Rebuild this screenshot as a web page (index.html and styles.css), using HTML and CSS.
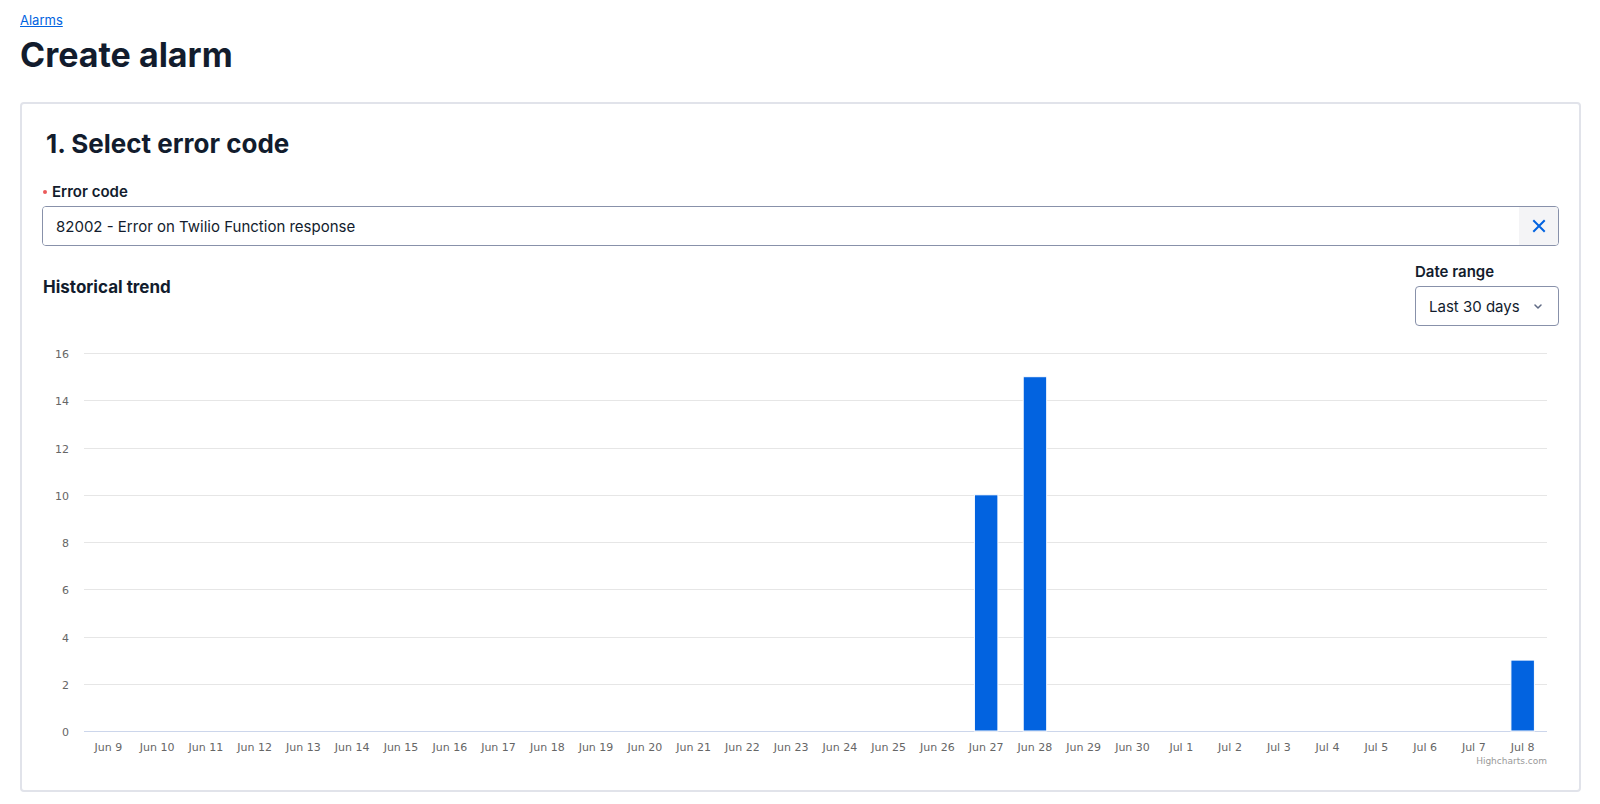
FILE: index.html
```html
<!DOCTYPE html>
<html lang="en">
<head>
  <meta charset="UTF-8">
  <title>Create alarm</title>
  <link rel="stylesheet" href="styles.css">
</head>
<body>
  <div class="page">
    <a class="crumb" href="#">Alarms</a>
    <h1>Create alarm</h1>

    <section class="card">
      <h2>1. Select error code</h2>

      <label class="field-label" for="errorCode"><span class="required"></span>Error code</label>
      <div class="combobox">
        <input id="errorCode" type="text" value="82002 - Error on Twilio Function response">
        <button class="clear" type="button" aria-label="Clear">
          <svg width="14" height="14" viewBox="0 0 14 14"><path d="M2 2 L12 12 M12 2 L2 12" stroke="#0263e0" stroke-width="2" fill="none" stroke-linecap="square"/></svg>
        </button>
      </div>

      <div class="trend-head">
        <h3>Historical trend</h3>
        <div class="range">
          <label class="field-label" for="dateRange">Date range</label>
          <div class="select" id="dateRange">
            <span>Last 30 days</span>
            <svg width="8" height="5" viewBox="0 0 8 5"><path d="M1 1 L4 4 L7 1" stroke="#606b85" stroke-width="1.5" fill="none" stroke-linecap="round" stroke-linejoin="round"/></svg>
          </div>
        </div>
      </div>

      <svg id="trendChart" class="chart" viewBox="0 0 1517 435" width="100%" height="435"></svg>
    </section>
  </div>

  <script>
    const days = [];
    for (let d = 9; d <= 30; d++) days.push('Jun ' + d);
    for (let d = 1; d <= 8; d++) days.push('Jul ' + d);
    const counts = { 'Jun 27': 10, 'Jun 28': 15, 'Jul 8': 3 };

    const chart = document.getElementById('trendChart');
    const left = 42, right = 1505, bottom = 395, unit = 23.62;
    const step = (right - left) / days.length;
    let out = '';

    // grid lines and y axis labels
    for (let v = 0; v <= 16; v += 2) {
      const y = Math.round(bottom - v * unit) + 0.5;
      if (v > 0) out += `<line x1="${left}" x2="${right}" y1="${y}" y2="${y}" class="grid"/>`;
      out += `<text x="27" y="${y + 4}" text-anchor="end" class="tick">${v}</text>`;
    }
    out += `<line x1="${left}" x2="${right}" y1="${bottom + 0.5}" y2="${bottom + 0.5}" class="axis"/>`;

    // bars and x axis labels
    days.forEach((day, i) => {
      const cx = left + (i + 0.5) * step;
      const v = counts[day] || 0;
      if (v) {
        const h = v * unit;
        out += `<rect x="${(cx - 11.75).toFixed(1)}" y="${(bottom - h).toFixed(1)}" width="23.5" height="${h.toFixed(1)}" class="bar"/>`;
      }
      out += `<text x="${cx.toFixed(1)}" y="415" text-anchor="middle" class="tick">${day}</text>`;
    });

    out += `<text x="${right}" y="428" text-anchor="end" class="credits">Highcharts.com</text>`;
    chart.innerHTML = out;
  </script>
</body>
</html>
```

FILE: styles.css
```css
body {
  margin: 0;
  background-color: #ffffff;
  color: #121c2d;
  font-family: Inter, 'Noto Sans', sans-serif;
}
.page {
  padding: 9px 19px 0 20px;
}
.crumb {
  display: inline-block;
  font-size: 13px;
  line-height: 16px;
  color: #0263e0;
  text-decoration: underline;
}
h1 {
  margin: 6px 0 27px;
  font-size: 34px;
  line-height: 40px;
  font-weight: 700;
}
.card {
  border: 2px solid #e1e3ea;
  border-radius: 4px;
  padding: 24px 20px 19px;
}
h2 {
  margin: 0 0 22px;
  padding-left: 4px;
  font-size: 26px;
  line-height: 32px;
  font-weight: 700;
}
.field-label {
  display: flex;
  align-items: center;
  margin-bottom: 4px;
  font-size: 15px;
  line-height: 20px;
  font-weight: 600;
}
.required {
  width: 4px;
  height: 4px;
  border-radius: 50%;
  background-color: #eb5a5a;
  margin: 0 5px 0 1px;
}
.combobox {
  display: flex;
  height: 40px;
  box-sizing: border-box;
  border: 1px solid #8891aa;
  border-radius: 4px;
  overflow: hidden;
}
.combobox input {
  flex: 1;
  border: none;
  outline: none;
  padding: 0 13px;
  font-family: inherit;
  font-size: 15px;
  color: #121c2d;
}
.clear {
  width: 39px;
  border: none;
  background-color: #f4f4f6;
  display: flex;
  align-items: center;
  justify-content: center;
  padding: 0;
}
.trend-head {
  display: flex;
  justify-content: space-between;
  align-items: flex-start;
  margin-top: 16px;
}
h3 {
  margin: 13px 0 0 1px;
  font-size: 17px;
  line-height: 24px;
  font-weight: 700;
}
.select {
  width: 144px;
  height: 40px;
  box-sizing: border-box;
  border: 1px solid #8891aa;
  border-radius: 4px;
  display: flex;
  align-items: center;
  justify-content: space-between;
  padding: 0 16px 0 13px;
  font-size: 15px;
}
.chart {
  display: block;
  margin-top: 10px;
}
.chart .grid {
  stroke: #e6e6e6;
  stroke-width: 1;
}
.chart .axis {
  stroke: #ccd6eb;
  stroke-width: 1;
}
.chart .bar {
  fill: #0263e0;
  stroke: #ffffff;
  stroke-width: 1;
}
.chart .tick {
  font-family: 'DejaVu Sans', sans-serif;
  font-size: 11px;
  fill: #666666;
}
.chart .credits {
  font-family: 'DejaVu Sans', sans-serif;
  font-size: 9px;
  fill: #999999;
}
```
